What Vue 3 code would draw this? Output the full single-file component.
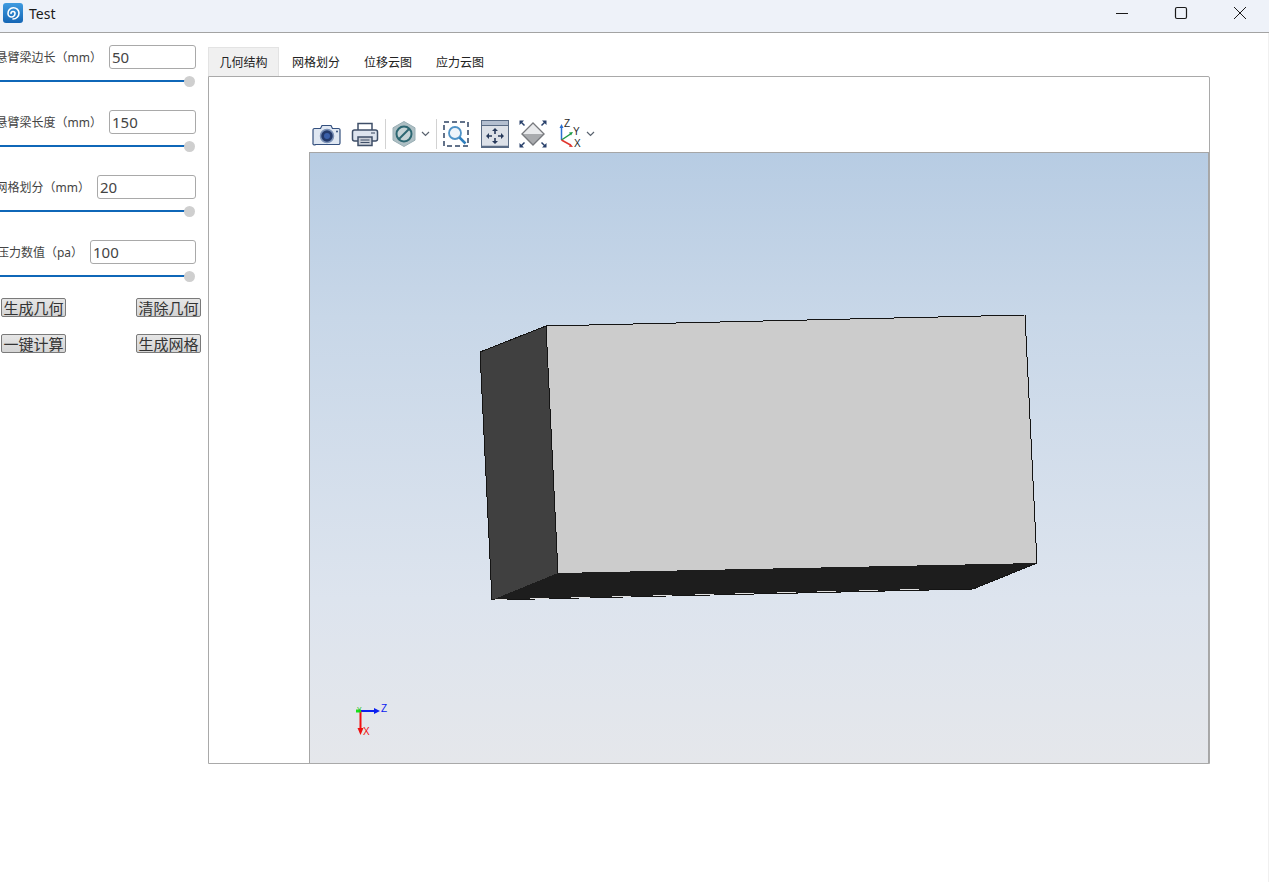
<template>
  <div class="window">
    <header class="titlebar">
      <svg class="logo" viewBox="0 0 20 20" width="20" height="20">
        <defs>
          <linearGradient id="logoBg" x1="0" y1="0" x2="0" y2="1">
            <stop offset="0" stop-color="#3f9be0" />
            <stop offset="1" stop-color="#1566b5" />
          </linearGradient>
        </defs>
        <rect width="20" height="20" rx="3" fill="url(#logoBg)" />
        <path d="M8 10.500a2 2 0 0 1 4 0a3.500 3.500 0 0 1-7 0a5.500 5.500 0 0 1 11-.5M16 10a6 6 0 0 1-6 6" fill="none" stroke="#fff" stroke-width="1.600" stroke-linecap="round" />
      </svg>
      <span class="app-title">Test</span>
      <div class="win-controls">
        <svg width="14" height="14" viewBox="0 0 14 14"><path d="M1 7.500h12" stroke="#1a1a1a" stroke-width="1" /></svg>
        <svg width="14" height="14" viewBox="0 0 14 14"><rect x="1.500" y="1.500" width="11" height="11" rx="1.500" fill="none" stroke="#1a1a1a" stroke-width="1.200" /></svg>
        <svg width="14" height="14" viewBox="0 0 14 14"><path d="M1 1l12 12M13 1L1 13" stroke="#1a1a1a" stroke-width="1" /></svg>
      </div>
    </header>

    <main class="content">
      <aside class="sidebar">
        <div v-for="p in params" :key="p.label" class="param">
          <div class="param-row">
            <label class="param-label">{{ p.label }}</label>
            <input class="param-input" :style="{ width: p.width + 'px' }" type="text" :value="p.value" />
          </div>
          <div class="slider">
            <span class="slider-track"></span>
            <span class="slider-thumb"></span>
          </div>
        </div>
        <div class="actions">
          <button v-for="b in buttons" :key="b" class="action">{{ b }}</button>
        </div>
      </aside>

      <section class="workspace">
        <nav class="tabs">
          <span v-for="(t, i) in tabs" :key="t" class="tab" :class="{ active: i === 0 }">{{ t }}</span>
        </nav>
        <div class="panel">
          <div class="toolbar">
            <!-- camera -->
            <svg class="tool" width="30" height="24" viewBox="0 0 30 24" style="margin-left: 3px">
              <path d="M2.500 6.500h6l1.500-3h9l1.500 3h6a1.500 1.500 0 0 1 1.500 1.500v13a1.500 1.500 0 0 1-1.500 1.500h-23A1.500 1.500 0 0 1 1 21V8a1.500 1.500 0 0 1 1.500-1.500z" fill="#dfe7f2" stroke="#34507e" stroke-width="1.200" />
              <circle cx="15" cy="14" r="6.500" fill="#23396a" stroke="#7d93b8" stroke-width="1.500" />
              <circle cx="15" cy="14" r="3" fill="#3a5fa8" />
              <circle cx="25" cy="9.500" r="1" fill="#34507e" />
            </svg>
            <!-- printer -->
            <svg class="tool" width="28" height="26" viewBox="0 0 28 26" style="margin-left: 9px">
              <path d="M7 9V2.500h14V9" fill="#fff" stroke="#3f4f68" stroke-width="1.500" />
              <rect x="1.500" y="9" width="25" height="11" rx="2" fill="#dde4ee" stroke="#3f4f68" stroke-width="1.500" />
              <rect x="7" y="16" width="14" height="8.500" fill="#c9ced6" stroke="#3f4f68" stroke-width="1.500" />
              <path d="M9.500 19h9M9.500 21.500h9" stroke="#3f4f68" />
              <path d="M20 12h4" stroke="#6d7a8d" stroke-width="1.500" />
            </svg>
            <span class="sep" style="margin-left: 6px"></span>
            <!-- hex section -->
            <svg class="tool" width="26" height="28" viewBox="0 0 26 28" style="margin-left: 5px">
              <path d="M13 1.500l11 6.300v12.400l-11 6.300-11-6.300V7.800z" fill="#aebfc4" stroke="#9aafb5" />
              <circle cx="13" cy="14" r="7.500" fill="#c5d3d6" stroke="#2d6772" stroke-width="2" />
              <path d="M8 19l10-10" stroke="#2d6772" stroke-width="2" />
            </svg>
            <svg class="caret" width="9" height="6" viewBox="0 0 9 6" style="margin-left: 4px"><path d="M1 1l3.500 3.500L8 1" fill="none" stroke="#59626e" stroke-width="1.200" /></svg>
            <span class="sep" style="margin-left: 6px"></span>
            <!-- zoom box -->
            <svg class="tool" width="28" height="28" viewBox="0 0 28 28" style="margin-left: 5px">
              <rect x="2" y="2" width="24" height="24" fill="none" stroke="#2f4464" stroke-width="1.500" stroke-dasharray="5 3" />
              <circle cx="13" cy="13" r="6" fill="#eef4fa" stroke="#4f93c7" stroke-width="1.800" />
              <path d="M17.500 17.500l6 6" stroke="#2f7fbe" stroke-width="2.500" />
            </svg>
            <!-- fit window -->
            <svg class="tool" width="28" height="28" viewBox="0 0 28 28" style="margin-left: 11px">
              <rect x="0.500" y="0.500" width="27" height="27" fill="#dde1e8" stroke="#5a6b84" />
              <rect x="1" y="1" width="26" height="4" fill="#b4bfd0" />
              <path d="M1 5.500h26" stroke="#5a6b84" />
              <path d="M1 26.500h26" stroke="#5a6b84" stroke-width="1.500" />
              <path d="M14 10v4M14 18v4M7 16h4M17 16h4" stroke="#27395a" stroke-width="1.600" />
              <path d="M14 8l-3 3h6zM14 24l-3-3h6zM5 16l3-3v6zM23 16l-3-3v6z" fill="#27395a" />
            </svg>
            <!-- fit all diamond -->
            <svg class="tool" width="28" height="28" viewBox="0 0 28 28" style="margin-left: 10px">
              <path d="M14 3l11 11-11 11L3 14z" fill="#a9abae" stroke="#77797d" stroke-width="1.400" />
              <path d="M14 4l10 10H4z" fill="#e9eaec" />
              <path d="M1.500 1.500l4 4M26.500 1.500l-4 4M1.500 26.500l4-4M26.500 26.500l-4-4" stroke="#28406b" stroke-width="1.500" />
              <path d="M0.500 0.500h4.500l-4.500 4.500zM27.500 0.500H23l4.500 4.500zM0.500 27.500h4.500l-4.500-4.500zM27.500 27.500H23l4.500-4.500z" fill="#28406b" />
            </svg>
            <!-- triad -->
            <svg class="tool triad" width="26" height="30" viewBox="0 0 26 30" style="margin-left: 12px">
              <path d="M2.500 21V8" stroke="#2b6fd0" stroke-width="1.500" />
              <path d="M2.500 5l-2 4h4z" fill="#2b6fd0" />
              <path d="M2.500 21l9-6" stroke="#1f9a46" stroke-width="1.500" />
              <path d="M14 13l-4 .5 2 3z" fill="#1f9a46" />
              <path d="M2.500 21l9 5" stroke="#e0342c" stroke-width="1.500" />
              <path d="M14 28l-4-.3 1.500-3z" fill="#e0342c" />
              <text x="5" y="8" class="axis-t">Z</text>
              <text x="14" y="16" class="axis-t">Y</text>
              <text x="15" y="28" class="axis-t">X</text>
            </svg>
            <svg class="caret" width="9" height="6" viewBox="0 0 9 6" style="margin-left: 1px"><path d="M1 1l3.500 3.500L8 1" fill="none" stroke="#59626e" stroke-width="1.200" /></svg>
          </div>
          <div class="viewer">
            <svg class="scene" width="899" height="610" viewBox="310 153 899 610">
              <g shape-rendering="crispEdges">
                <polygon points="480,352 546,326 558,573 492,600" fill="#404040" />
                <polygon points="546,326 1025,315 1037,563 558,573" fill="#cccccc" />
                <polygon points="492,600 558,573 1037,563 973,589" fill="#1d1d1d" />
                <path d="M480 352L546 326L1025 315L1037 563L973 589L492 600Z M546 326L558 573" fill="none" stroke="#141414" stroke-width="1" />
              </g>
              <path v-for="d in edgeDashes" :key="d" :d="d" stroke="#e2e2e2" stroke-width="1" fill="none" />
              <!-- axis triad -->
              <path d="M360 711h15" stroke="#0b20f0" stroke-width="2" />
              <path d="M380 711l-6-3v6z" fill="#0b20f0" />
              <path d="M360.500 711v18" stroke="#f01010" stroke-width="2" />
              <path d="M360.500 735l-3-7h6z" fill="#f01010" />
              <path d="M356 711h5" stroke="#18e018" stroke-width="3" />
              <text x="381" y="712" class="axis-z">Z</text>
              <text x="363" y="735" class="axis-x">X</text>
              <text x="357" y="712" class="axis-y">Y</text>
            </svg>
          </div>
        </div>
      </section>
    </main>
  </div>
</template>

<script setup>
const params = [
  { label: '悬臂梁边长（mm）', value: '50', width: 87 },
  { label: '悬臂梁长度（mm）', value: '150', width: 87 },
  { label: '网格划分（mm）', value: '20', width: 99 },
  { label: '压力数值（pa）', value: '100', width: 106 }
]

const buttons = ['生成几何', '清除几何', '一键计算', '生成网格']

const tabs = ['几何结构', '网格划分', '位移云图', '应力云图']

// the light breaks along the lower edge of the box (z-fighting in the original)
const edgeDashes = [495, 530, 571, 612, 653, 695, 735, 777, 817, 859, 900].map((x) => {
  const y = Math.round(598.2 - (x - 530) * 0.0238) + 0.5
  return `M${x} ${y}h${x === 495 ? 12 : 19}`
})
</script>

<style>
html, body {
  margin: 0;
  background: #fff;
}
</style>

<style scoped>
.window {
  width: 1269px;
  height: 882px;
  overflow: hidden;
  display: flex;
  flex-direction: column;
  font-family: "Noto Sans", "Noto Sans CJK SC", sans-serif;
  color: #333;
  background: #fff;
}

.titlebar {
  height: 33px;
  flex: none;
  box-sizing: border-box;
  display: flex;
  align-items: center;
  background: #eef2f9;
  border-bottom: 1px solid #a3a3a3;
  padding: 0 0 6px 3px;
}

.logo {
  flex: none;
}

.app-title {
  margin-left: 6px;
  font-size: 14px;
  color: #1a1a1a;
}

.win-controls {
  margin-left: auto;
  margin-right: 22px;
  display: flex;
  gap: 45px;
}

.content {
  flex: 1;
  display: flex;
  border-right: 1px solid #f0f0f0;
}

.sidebar {
  width: 208px;
  flex: none;
  overflow: hidden;
  padding-top: 12px;
  box-sizing: border-box;
}

.param {
  height: 65px;
  width: 196px;
}

.param-row {
  display: flex;
  justify-content: flex-end;
  align-items: center;
  height: 24px;
  white-space: nowrap;
}

.param-label {
  font-family: "Noto Sans", "Noto Sans CJK SC", sans-serif;
  font-size: 12px;
  color: #444;
  margin-right: 7px;
}

.param-input {
  flex: none;
  height: 24px;
  box-sizing: border-box;
  border: 1px solid #a9a9a9;
  border-radius: 3px;
  padding: 0 2px;
  font-family: "Noto Sans", sans-serif;
  font-size: 15px;
  color: #444;
  outline: none;
}

.slider {
  position: relative;
  height: 12px;
  margin-top: 6px;
}

.slider-track {
  position: absolute;
  left: 0;
  right: 6px;
  top: 5px;
  height: 2px;
  background: #0f67b8;
}

.slider-thumb {
  position: absolute;
  right: 1px;
  top: 1px;
  width: 11px;
  height: 11px;
  border-radius: 50%;
  background: #cfcfcf;
}

.actions {
  margin-top: -7px;
  padding-left: 1px;
  display: grid;
  grid-template-columns: 65px 65px;
  justify-content: space-between;
  width: 200px;
  row-gap: 17px;
}

.action {
  height: 19px;
  width: 65px;
  padding: 0;
  box-sizing: border-box;
  border: 1px solid #7a7a7a;
  border-radius: 2px;
  background: linear-gradient(#e6e6e6, #d4d4d4);
  font-family: "Noto Sans CJK SC", sans-serif;
  font-size: 15px;
  line-height: 17px;
  color: #333;
  white-space: nowrap;
  overflow: hidden;
}

.workspace {
  width: 1002px;
  flex: none;
  padding-top: 14px;
}

.tabs {
  display: flex;
  height: 29px;
  position: relative;
}

.tab {
  width: 72px;
  height: 29px;
  box-sizing: border-box;
  text-align: center;
  font-family: "Noto Sans CJK SC", sans-serif;
  font-size: 12px;
  line-height: 30px;
  color: #222;
}

.tab:first-child {
  width: 71px;
  margin-right: 1px;
}

.tab.active {
  background: #f0f0f0;
  border: 1px solid #e3e3e3;
  border-bottom: none;
  line-height: 28px;
}

.panel {
  height: 688px;
  box-sizing: border-box;
  border: 1px solid #a9a9a9;
  border-radius: 0 2px 0 0;
  display: flex;
  flex-direction: column;
  padding-top: 38px;
  align-items: flex-end;
}

.toolbar {
  width: 900px;
  height: 37px;
  flex: none;
  display: flex;
  align-items: center;
}

.tool {
  flex: none;
}

.caret {
  flex: none;
}

.sep {
  width: 1px;
  height: 30px;
  flex: none;
  background: #d2d2d2;
}

.axis-t {
  font-family: "Liberation Sans", sans-serif;
  font-size: 10px;
  fill: #2a2a2a;
}

.viewer {
  width: 900px;
  flex: 1;
  box-sizing: border-box;
  border-top: 1px solid #a6a6a6;
  border-left: 1px solid #a6a6a6;
  border-right: 1px solid #a6a6a6;
  background: linear-gradient(#b7cce3, #c8d7e8 27%, #dde4ee 73%, #e5e7eb);
  overflow: hidden;
}

.scene {
  display: block;
}

.axis-z {
  font-family: "Liberation Sans", sans-serif;
  font-size: 10px;
  fill: #0b20f0;
}

.axis-x {
  font-family: "Liberation Sans", sans-serif;
  font-size: 10px;
  fill: #f01010;
}

.axis-y {
  font-family: "Liberation Sans", sans-serif;
  font-size: 7px;
  fill: #18c018;
}
</style>
